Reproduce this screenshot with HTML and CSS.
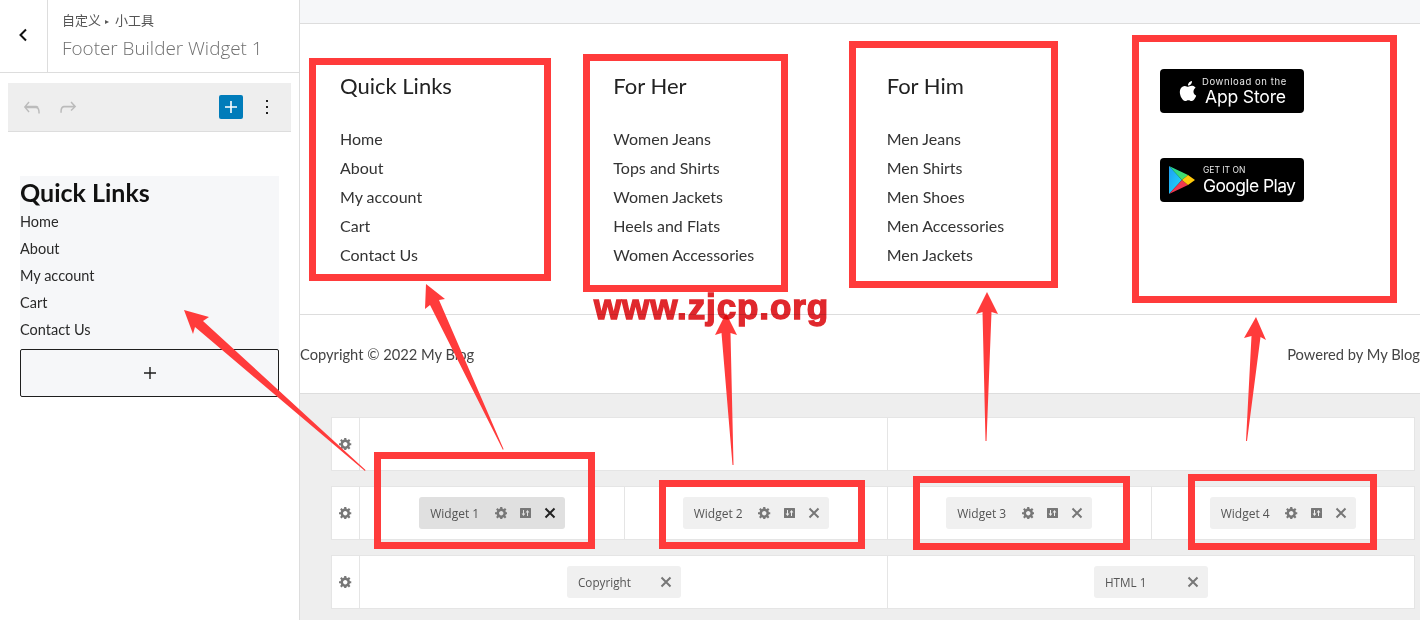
FILE: index.html
```html
<!DOCTYPE html>
<html lang="zh">
<head>
<meta charset="utf-8">
<title>Footer Builder Widget 1</title>
<link rel="stylesheet" href="styles.css">
</head>
<body>
<svg class="defs" width="0" height="0" aria-hidden="true">
  <defs>
    <linearGradient id="play-blue" x1="0" y1="0" x2="1" y2="1"><stop offset="0" stop-color="#1f9cf5"/><stop offset="1" stop-color="#1fe0f8"/></linearGradient>
    <linearGradient id="play-green" x1="0" y1="0" x2="1" y2="1"><stop offset="0" stop-color="#1fd5a0"/><stop offset="1" stop-color="#4fe05a"/></linearGradient>
  </defs>
  <symbol id="gear" viewBox="1 2 17 17"><path fill-rule="evenodd" d="M18 12h-2.18c-.17.7-.44 1.35-.81 1.93l1.54 1.54-2.1 2.1-1.54-1.54c-.58.36-1.23.63-1.91.79V19H8v-2.18c-.68-.16-1.33-.43-1.91-.79l-1.54 1.54-2.12-2.12 1.54-1.54c-.36-.58-.63-1.23-.79-1.91H1V9.03h2.17c.16-.7.44-1.35.8-1.94L2.43 5.55l2.1-2.1 1.54 1.54c.58-.37 1.24-.64 1.93-.81V2h3v2.18c.68.16 1.33.43 1.91.79l1.54-1.54 2.12 2.12-1.54 1.54c.36.59.64 1.24.8 1.94H18V12zm-8.5 1.5c1.66 0 3-1.34 3-3s-1.34-3-3-3-3 1.34-3 3 1.34 3 3 3z"/></symbol>
  <symbol id="swap" viewBox="0 0 11 10"><path fill-rule="evenodd" d="M.5 0h10a.5.5 0 0 1 .5.5v9a.5.5 0 0 1-.5.5H.5a.5.5 0 0 1-.5-.5v-9A.5.5 0 0 1 .5 0zM3 2v3.500H1.600L3.500 8l1.900-2.500H4V2zm4.500 0L5.600 4.500H7V8h1V4.500h1.400z"/></symbol>
  <symbol id="cross" viewBox="0 0 12 12"><path d="M1.500 1.500l9 9m0-9l-9 9" fill="none" stroke="currentColor" stroke-width="2"/></symbol>
</svg>

<div class="page">
  <aside class="sidebar">
    <header class="side-head">
      <div class="back">
        <svg width="10" height="14" viewBox="0 0 10 14"><path d="M8 1.500L2.500 7 8 12.500" fill="none" stroke="#111" stroke-width="2"/></svg>
      </div>
      <div class="side-title">
        <div class="crumb">自定义<span class="crumb-sep">▸</span>小工具</div>
        <div class="section">Footer Builder Widget 1</div>
      </div>
    </header>
    <div class="toolbar">
      <svg class="tool" width="24" height="24" viewBox="0 0 24 24"><path d="M18.300 11.700c-.6-.6-1.400-.9-2.300-.9H6.700l2.900-3.300-1.100-1L3.900 12l4.600 5.500 1.100-1-2.900-3.300H16c.5 0 .9.200 1.300.5 1 1 1 3.400 1 4.500v.3h1.500v-.2c0-1.500 0-4.300-1.500-5.800z"/></svg>
      <svg class="tool" width="24" height="24" viewBox="0 0 24 24"><path d="M15.600 6.500l-1.100 1 2.900 3.300H8c-.9 0-1.700.3-2.300.9-1.400 1.500-1.400 4.200-1.400 5.800v.2h1.500v-.3c0-1.100 0-3.500 1-4.500.3-.3.7-.5 1.300-.5h9.200L14.500 15l1.100 1.100 4.600-4.600-4.600-5z"/></svg>
      <div class="add-blue">
        <svg width="24" height="24" viewBox="0 0 24 24"><path d="M18 11.200h-5.200V6h-1.600v5.200H6v1.600h5.200V18h1.600v-5.200H18z" fill="#fff"/></svg>
      </div>
      <svg class="more" width="24" height="24" viewBox="0 0 24 24"><path d="M13 19h-2v-2h2v2zm0-6h-2v-2h2v2zm0-6h-2V5h2v2z" fill="#1e1e1e"/></svg>
    </div>
    <div class="editor">
      <div class="block">
        <h2 class="block-title">Quick Links</h2>
        <ul class="block-list">
          <li>Home</li><li>About</li><li>My account</li><li>Cart</li><li>Contact Us</li>
        </ul>
      </div>
      <div class="block-add">
        <svg width="24" height="24" viewBox="0 0 24 24"><path d="M18 11.300h-5.300V6h-1.400v5.300H6v1.400h5.300V18h1.400v-5.300H18z" fill="#1e1e1e"/></svg>
      </div>
    </div>
  </aside>

  <main class="main">
    <div class="topbar"></div>
    <section class="footer-widgets">
      <div class="widget">
        <h3>Quick Links</h3>
        <ul><li>Home</li><li>About</li><li>My account</li><li>Cart</li><li>Contact Us</li></ul>
      </div>
      <div class="widget">
        <h3>For Her</h3>
        <ul><li>Women Jeans</li><li>Tops and Shirts</li><li>Women Jackets</li><li>Heels and Flats</li><li>Women Accessories</li></ul>
      </div>
      <div class="widget">
        <h3>For Him</h3>
        <ul><li>Men Jeans</li><li>Men Shirts</li><li>Men Shoes</li><li>Men Accessories</li><li>Men Jackets</li></ul>
      </div>
      <div class="widget badges">
        <div class="badge">
          <svg class="apple" width="20" height="24" viewBox="0 0 24 24"><path fill="#fff" d="M12.152 6.896c-.948 0-2.415-1.078-3.960-1.040-2.040.027-3.910 1.183-4.961 3.014-2.117 3.675-.546 9.103 1.519 12.090 1.013 1.454 2.208 3.090 3.792 3.039 1.520-.065 2.090-.987 3.935-.987 1.831 0 2.350.987 3.960.948 1.637-.026 2.676-1.480 3.676-2.948 1.156-1.688 1.636-3.325 1.662-3.415-.039-.013-3.182-1.221-3.220-4.857-.026-3.040 2.480-4.494 2.597-4.559-1.429-2.090-3.623-2.324-4.390-2.376-2-.156-3.675 1.090-4.610 1.090zM15.530 3.830c.843-1.012 1.400-2.427 1.245-3.830-1.207.052-2.662.805-3.532 1.818-.78.896-1.454 2.338-1.273 3.714 1.338.104 2.715-.688 3.559-1.701"/></svg>
          <div class="badge-text">
            <span class="small">Download on the</span>
            <span class="big">App Store</span>
          </div>
        </div>
        <div class="badge play">
          <svg class="gplay" width="26" height="28" viewBox="0 0 26 28">
            <path d="M0 0v28l13-14z" fill="url(#play-blue)"/>
            <path d="M0 0l13 14 6-5z" fill="url(#play-green)"/>
            <path d="M0 28l13-14 6 5z" fill="#f0384f"/>
            <path d="M19 9l7 5-7 5-6-5z" fill="#ffc90a"/>
          </svg>
          <div class="badge-text">
            <span class="small caps">GET IT ON</span>
            <span class="big">Google Play</span>
          </div>
        </div>
      </div>
    </section>
    <section class="copybar">
      <span>Copyright © 2022 My Blog</span>
      <span>Powered by My Blog</span>
    </section>
    <section class="builder">
      <div class="row">
        <div class="row-gear"><svg class="ico"><use href="#gear"/></svg></div>
        <div class="cell"></div>
        <div class="cell"></div>
      </div>
      <div class="row">
        <div class="row-gear"><svg class="ico"><use href="#gear"/></svg></div>
        <div class="cell">
          <div class="chip active"><span class="chip-name">Widget 1</span><svg class="ico"><use href="#gear"/></svg><svg class="ico swap"><use href="#swap"/></svg><svg class="x"><use href="#cross"/></svg></div>
        </div>
        <div class="cell">
          <div class="chip"><span class="chip-name">Widget 2</span><svg class="ico"><use href="#gear"/></svg><svg class="ico swap"><use href="#swap"/></svg><svg class="x"><use href="#cross"/></svg></div>
        </div>
        <div class="cell">
          <div class="chip"><span class="chip-name">Widget 3</span><svg class="ico"><use href="#gear"/></svg><svg class="ico swap"><use href="#swap"/></svg><svg class="x"><use href="#cross"/></svg></div>
        </div>
        <div class="cell">
          <div class="chip"><span class="chip-name">Widget 4</span><svg class="ico"><use href="#gear"/></svg><svg class="ico swap"><use href="#swap"/></svg><svg class="x"><use href="#cross"/></svg></div>
        </div>
      </div>
      <div class="row">
        <div class="row-gear"><svg class="ico"><use href="#gear"/></svg></div>
        <div class="cell">
          <div class="chip short"><span class="chip-name">Copyright</span><svg class="x"><use href="#cross"/></svg></div>
        </div>
        <div class="cell">
          <div class="chip short"><span class="chip-name">HTML 1</span><svg class="x"><use href="#cross"/></svg></div>
        </div>
      </div>
    </section>
  </main>

  <svg class="marks" width="1420" height="620" viewBox="0 0 1420 620" aria-hidden="true">
    <g class="frames">
      <rect x="312.500" y="61.500" width="235" height="216"/>
      <rect x="586.500" y="57.500" width="198" height="231"/>
      <rect x="852.500" y="44.500" width="202" height="240"/>
      <rect x="1135.500" y="38.500" width="258" height="261"/>
      <rect x="377.500" y="455.500" width="214" height="90"/>
      <rect x="662.500" y="483.500" width="199" height="62"/>
      <rect x="916.500" y="479.500" width="210" height="67"/>
      <rect x="1191.500" y="477.500" width="182" height="69"/>
    </g>
    <g class="arrows">
      <polygon points="184,310 209,317 203,321 365.500,470 365,471 195,327 193,334"/>
      <polygon points="426,284 445,299 439,300 503.500,449 503,450 430,305 425,309"/>
      <polygon points="726,313 737,335 730.500,333 733.500,465 732.500,465 721.500,333 715,335"/>
      <polygon points="987,292 998,314 991.500,312 986.500,441 985.500,441 982.500,312 976,314"/>
      <polygon points="1256,317 1266,340 1260.500,337 1247,441 1246,441 1251.500,336 1244,338"/>
    </g>
  </svg>
  <div class="watermark">www.zjcp.org</div>
</div>
</body>
</html>
```
FILE: styles.css
```css
* { box-sizing: border-box; }
html, body { margin: 0; padding: 0; height: 620px; overflow: hidden; background: #fff; }
body { font-family: "Lato", "Noto Sans", sans-serif; color: #333; }
ul { list-style: none; margin: 0; padding: 0; }
h2, h3 { margin: 0; }
.defs { position: absolute; }

.page { position: relative; display: flex; width: 1420px; height: 620px; overflow: hidden; }

/* Sidebar */
.sidebar { width: 300px; flex: none; border-right: 1px solid #ddd; background: #fff; }
.side-head { display: flex; height: 73px; border-bottom: 1px solid #ddd; }
.back { width: 48px; display: flex; align-items: center; justify-content: center; border-right: 1px solid #ddd; padding-right: 2px; padding-bottom: 2px; }
.side-title { padding: 11px 0 0 14px; }
.crumb { font-family: "Noto Sans CJK SC", "Open Sans", sans-serif; font-size: 13px; line-height: 18px; color: #555; }
.crumb-sep { font-size: 8px; margin: 0 6px 0 4px; vertical-align: 1px; }
.section { font-family: "Open Sans", "Noto Sans", sans-serif; font-weight: 300; font-size: 18.900px; line-height: 26px; color: #707070; margin-top: 5px; }

.toolbar { display: flex; align-items: center; height: 49px; margin: 10px 8px 0; padding: 0 0 1px 12px; gap: 12px; background: #eee; border-bottom: 1px solid #ddd; }
.tool { fill: #bbb; }
.add-blue { width: 24px; height: 24px; margin-left: auto; background: #007cba; border-radius: 2px; }
.more { margin-right: 12px; margin-left: 0; }

.editor { padding: 44px 20px 0; }
.block { background: #f6f7f9; padding-bottom: 6px; }
.block-title { font-size: 25px; font-weight: 700; line-height: 32px; color: #111; }
.block-list li { font-size: 14.500px; line-height: 27px; color: #2a2a2a; }
.block-add { height: 48px; display: flex; align-items: center; justify-content: center; background: #f6f7f9; border: 1px solid #1e1e1e; border-radius: 2px; }

/* Main */
.main { flex: 1; min-width: 0; display: flex; flex-direction: column; }
.topbar { height: 24px; flex: none; background: #f6f7f9; border-bottom: 1px solid #ddd; }
.footer-widgets { height: 291px; flex: none; display: grid; grid-template-columns: repeat(4, 273.330px); padding: 47px 0 0 40px; border-bottom: 1px solid #ddd; }
.widget h3 { font-size: 22px; font-weight: 400; line-height: 30px; color: #222; margin-bottom: 23px; }
.widget li { font-size: 16px; line-height: 29px; color: #333; }

.badges { display: flex; flex-direction: column; gap: 45px; margin-top: -2px; }
.badge { width: 144px; height: 44px; background: #000; border-radius: 4px; display: flex; align-items: center; color: #fff; font-family: "Inter", "Noto Sans", sans-serif; padding-left: 18px; gap: 4px; }
.badge.play { padding-left: 9px; gap: 8px; }
.apple { flex: none; margin-top: -1px; }
.badge-text { display: flex; flex-direction: column; }
.small { font-size: 9.500px; line-height: 11px; letter-spacing: .6px; color: #e8e8e8; }
.small.caps { font-size: 8.500px; letter-spacing: 0; }
.big { font-size: 17.600px; line-height: 20px; letter-spacing: -.2px; font-weight: 400; margin-left: 3px; }
.play .big { font-size: 17.500px; letter-spacing: -.6px; margin-left: 0; }

.copybar { height: 79px; flex: none; display: flex; justify-content: space-between; align-items: center; font-size: 14.700px; color: #444; border-bottom: 1px solid #ddd; }

.builder { flex: 1; background: #eee; padding: 23px 5px 0 31px; display: flex; flex-direction: column; gap: 15px; }
.row { flex: none; height: 54px; display: flex; background: #fff; border: 1px solid #e5e5e5; }
.row-gear { width: 27px; flex: none; display: flex; align-items: center; justify-content: center; }
.cell { flex: 1; display: flex; align-items: center; justify-content: center; border-left: 1px solid #e5e5e5; }
.row-gear + .cell { padding-left: 1px; }

.chip { width: 146px; height: 32px; display: flex; align-items: center; padding: 0 9px 0 11px; background: #f0f0f0; border-radius: 3px; color: #777; }
.chip.short { width: 114px; }
.chip.active { background: #e0e0e0; }
.chip-name { margin-right: auto; font-family: "Open Sans", "Noto Sans", sans-serif; font-size: 12px; color: #555; }
.short .chip-name { font-size: 11.700px; }
.ico { width: 12.500px; height: 12.500px; fill: #777; flex: none; }
.swap { width: 11px; height: 10px; margin: 0 13px 0 13px; }
.x { width: 12px; height: 12px; flex: none; color: #777; }
.active .x { color: #222; }

/* Annotations painted over the screenshot */
.watermark { position: absolute; left: 594px; top: 285px; font-family: "Liberation Sans", Arial, sans-serif; font-weight: 700; font-size: 35px; letter-spacing: .9px; line-height: 44px; color: #e0282d; -webkit-text-stroke: 1.400px #e0282d; white-space: nowrap; mix-blend-mode: multiply; }
.marks { position: absolute; left: 0; top: 0; pointer-events: none; }
.frames rect { fill: none; stroke: #ff3b3b; stroke-width: 7; }
.arrows polygon { fill: #ff3b3b; }
```
